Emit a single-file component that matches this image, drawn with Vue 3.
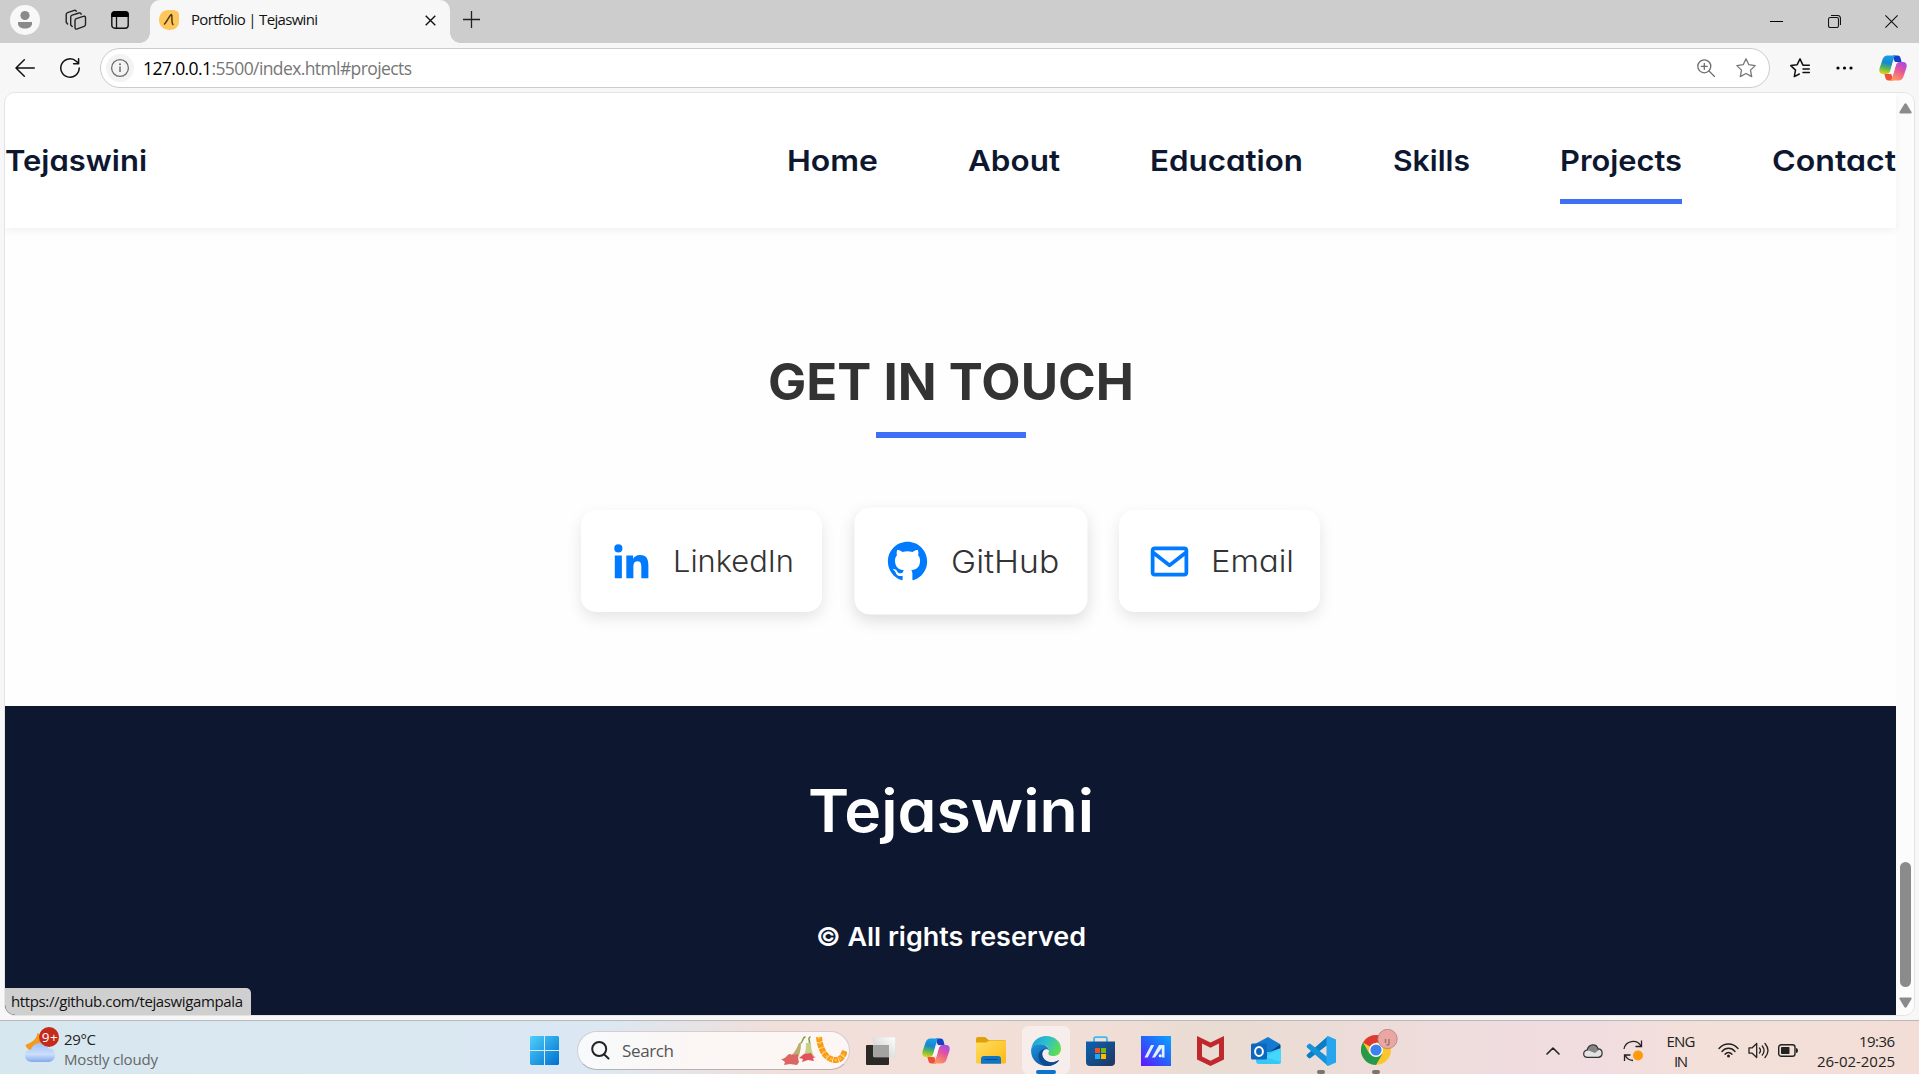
<script setup>
// Fits a label to the given width in pixels: by tracking, or with .stretch by
// widening the letterforms themselves.
const vFit = {
  mounted(el, { value, modifiers }) {
    const natural = parseFloat(getComputedStyle(el).width)
    if (modifiers.stretch) {
      el.style.width = `${value}px`
      el.style.transform = `scaleX(${value / natural})`
      return
    }
    const spacing = (value - natural) / (el.textContent.length - 1)
    el.style.letterSpacing = `${spacing}px`
    el.style.marginRight = `${-spacing}px`
  },
}

const nav = [
  { label: 'Home', width: 91 },
  { label: 'About', width: 92 },
  { label: 'Education', width: 153 },
  { label: 'Skills', width: 77 },
  { label: 'Projects', width: 122, active: true },
  { label: 'Contact', width: 124 },
]

const links = [
  {
    label: 'LinkedIn', width: 121, card: 241,
    path: 'M9.237 8.855v12.139h3.769v-6.003c0-1.584.298-3.118 2.262-3.118 1.937 0 1.961 1.811 1.961 3.218v5.904H21v-6.657c0-3.27-.704-5.783-4.526-5.783-1.835 0-3.065 1.007-3.568 1.960h-.051v-1.660H9.237zm-6.142 0H6.870v12.139H3.095zM4.983 2.821a2.188 2.188 0 1 0 0 4.376 2.188 2.188 0 0 0 0-4.376z',
  },
  {
    label: 'GitHub', width: 103, card: 222, hovered: true,
    path: 'M12.026 2c-5.509 0-9.974 4.465-9.974 9.974 0 4.406 2.857 8.145 6.821 9.465.499.09.679-.217.679-.481 0-.237-.008-.865-.011-1.696-2.775.602-3.361-1.338-3.361-1.338-.452-1.152-1.107-1.459-1.107-1.459-.905-.619.069-.605.069-.605 1.002.07 1.527 1.028 1.527 1.028.89 1.524 2.336 1.084 2.902.829.091-.645.351-1.085.635-1.334-2.214-.251-4.542-1.107-4.542-4.93 0-1.087.389-1.979 1.024-2.675-.101-.253-.446-1.268.099-2.64 0 0 .837-.269 2.742 1.021a9.582 9.582 0 0 1 2.496-.336 9.554 9.554 0 0 1 2.496.336c1.906-1.291 2.742-1.021 2.742-1.021.545 1.372.203 2.387.099 2.64.64.696 1.024 1.587 1.024 2.675 0 3.833-2.33 4.675-4.552 4.922.355.308.675.916.675 1.846 0 1.334-.012 2.41-.012 2.737 0 .267.178.577.687.479C19.146 20.115 22 16.379 22 11.974 22 6.465 17.535 2 12.026 2z',
  },
  {
    label: 'Email', width: 83, card: 201,
    path: 'M20 4H4c-1.103 0-2 .897-2 2v12c0 1.103.897 2 2 2h16c1.103 0 2-.897 2-2V6c0-1.103-.897-2-2-2zm0 2v.511l-8 6.223-8-6.222V6h16zM4 18V9.044l7.386 5.745a.994.994 0 0 0 1.228 0L20 9.044 20.002 18H4z',
  },
]
</script>

<template>
  <div class="desktop">
    <svg class="defs" width="0" height="0" aria-hidden="true">
      <defs>
        <linearGradient id="copBlue" x1="0.3" y1="0" x2="0.1" y2="1">
          <stop offset="0" stop-color="#1a9be8" /><stop offset=".35" stop-color="#1687d0" />
          <stop offset=".62" stop-color="#52b45c" /><stop offset="1" stop-color="#f4d40c" />
        </linearGradient>
        <linearGradient id="copPink" x1="0.8" y1="0" x2="0.3" y2="1">
          <stop offset="0" stop-color="#a24be8" /><stop offset=".45" stop-color="#e6559b" /><stop offset="1" stop-color="#ff9a5a" />
        </linearGradient>
        <symbol id="copilot" viewBox="0 0 28 26">
          <path d="M14 .5h4.500c2 0 2.600 1.200 3.200 3l.9 3.500h-5.600c-1.300 0-2.200-1.500-3-6.500z" fill="#1440c4" />
          <path d="M14 25.500H9.500c-2 0-2.600-1.200-3.200-3L5.400 19H11c1.500 0 2.200 1 3 6.500z" fill="#ee5138" />
          <path d="M8.500.5h8.700c-1.500.5-2.200 1.800-2.800 4l-3.100 11c-.7 2.300-1.700 3.500-3.800 3.500H4C1 19-.2 17 .5 13.500L3.600 4.300C4.500 1.800 6 .5 8.500.5z" fill="url(#copBlue)" />
          <path d="M19.500 25.500h-8.700c1.500-.5 2.200-1.800 2.800-4l3.100-11C17.400 8.200 18.400 7 20.500 7H24c3 0 4.200 2 3.500 5.500l-3.100 9.200c-.9 2.500-2.400 3.800-4.900 3.800z" fill="url(#copPink)" />
          <path d="M13.700 7.800h4.200l-1.200 2.700-2.200 7.700h-4.200l1.300-2.700z" fill="#fbf6f6" />
        </symbol>
      </defs>
    </svg>

    <div class="tabbar">
      <svg class="i-user" width="30" height="30" viewBox="0 0 30 30">
        <circle cx="15" cy="15" r="15" fill="#f8f8f8" /><circle cx="15" cy="10.500" r="4.600" fill="#8a8a8a" />
        <path d="M8 17h14v1.500c0 3.200-3 5-7 5s-7-1.800-7-5z" fill="#8a8a8a" />
      </svg>
      <svg class="i-spaces" width="22" height="22" viewBox="0 0 22 22" fill="none" stroke="#222" stroke-width="1.400" stroke-linejoin="round" stroke-linecap="round">
        <path d="m11.300 9.700 7-2.300q2.200-.6 2.200 1.300v6.800q0 1.400-1.400 1.900l-6.800 2.500q-2.300.8-2.300-1.300v-7q0-1.400 1.300-1.900z" />
        <path d="M7.200 17.500 5.700 16V8.200q0-1.500 1.400-2l7-2.200q1.600-.4 2 1.200" />
        <path d="M2.600 15 1.200 13.300V5.700q0-1.500 1.400-2L9.300 1.400q1.600-.4 2 1" />
      </svg>
      <svg class="i-tabs" width="18" height="18" viewBox="0 0 18 18">
        <rect x=".8" y=".8" width="16.400" height="16.400" rx="3" fill="none" stroke="#111" stroke-width="1.400" />
        <path d="M.3 6V3.500Q.3.300 3.500.300h11q3.200 0 3.200 3.200V6z" fill="#000" /><path d="M5.500 6v11" stroke="#111" stroke-width="1.300" />
      </svg>
      <div class="tab">
        <svg class="i-fav" width="20" height="20" viewBox="0 0 20 20">
          <path d="M9.500 0C15 0 20 0 20 5v6c0 6-4 9-9.500 9S0 16 0 10 4 0 9.500 0z" fill="#ffc65c" />
          <path d="M5.500 14c1.800-1.500 5.200-8.800 7-9.500 1.200.8-.7 7.500 1.500 10" fill="none" stroke="#4a3a12" stroke-width="1.500" stroke-linecap="round" />
        </svg>
        <span class="ui tab-title" v-fit="127">Portfolio | Tejaswini</span>
        <svg class="i-tabclose" width="11" height="11" viewBox="0 0 11 11"><path d="m.7.700 9.600 9.600M10.300.700.700 10.300" stroke="#111" stroke-width="1.400" /></svg>
      </div>
      <svg class="i-plus" width="17" height="17" viewBox="0 0 17 17"><path d="M8.500 0v17M0 8.500h17" stroke="#222" stroke-width="1.300" /></svg>
      <div class="window-controls">
        <svg width="13" height="13" viewBox="0 0 13 13"><path d="M0 6.500h13" stroke="#000" /></svg>
        <svg width="13" height="13" viewBox="0 0 13 13" fill="none" stroke="#111" stroke-width="1.100"><rect x=".5" y="2.500" width="10" height="10" rx="1.800" /><path d="M3 .5h6.500q3 0 3 3V10" /></svg>
        <svg width="13" height="13" viewBox="0 0 13 13"><path d="m.4.400 12.200 12.200M12.600.400.400 12.600" stroke="#111" stroke-width="1.100" /></svg>
      </div>
    </div>

    <div class="toolbar">
      <svg class="i-back" width="20" height="18" viewBox="0 0 20 18" fill="none" stroke="#111" stroke-width="1.500" stroke-linecap="round" stroke-linejoin="round"><path d="M19.300 9H1M9.300.800 1 9l8.300 8.200" /></svg>
      <svg class="i-reload" width="20" height="20" viewBox="0 0 20 20" fill="none" stroke="#111" stroke-width="1.500" stroke-linecap="round" stroke-linejoin="round"><path d="M19.200 10A9.200 9.200 0 1 1 16.500 3.500L18.500 5.500M18.600.800v4.900h-5" /></svg>
      <div class="address">
        <svg width="28" height="28" viewBox="0 0 28 28"><circle cx="14" cy="14" r="14" fill="#f3f3f3" /><circle cx="14" cy="14" r="8.400" fill="none" stroke="#6d6d6d" stroke-width="1.300" /><path d="M14 12.500V18" stroke="#6d6d6d" stroke-width="1.500" /><circle cx="14" cy="10.200" r="1" fill="#6d6d6d" /></svg>
        <span class="ui url" v-fit="269"><b>127.0.0.1</b>:5500/index.html#projects</span>
        <svg class="i-zoom" width="18" height="18" viewBox="0 0 18 18" fill="none" stroke="#6d6d6d" stroke-width="1.300" stroke-linecap="round"><circle cx="7.300" cy="7.300" r="6.500" /><path d="m12 12 5.500 5.500M4.300 7.300h6M7.300 4.300v6" /></svg>
        <svg class="i-star" width="20" height="20" viewBox="0 0 20 20" fill="none" stroke="#777" stroke-width="1.300" stroke-linejoin="round"><path d="m10 .8 2.800 5.900 6.400.9-4.700 4.500 1.200 6.500L10 15.500l-5.700 3.100 1.200-6.500L.8 7.600l6.400-.9z" /></svg>
      </div>
      <svg class="i-favs" width="20" height="20" viewBox="0 0 20 20" fill="none" stroke="#111" stroke-width="1.500" stroke-linejoin="round" stroke-linecap="round"><path d="m13.300 7-.5-.1L10 .9 7.200 6.700.8 7.600l4.700 4.500-1.200 6.500 5-2.600M13 11h6.300M13 14.400h6.300M13.300 7.200h6" /></svg>
      <svg class="i-dots" width="17" height="4" viewBox="0 0 17 4"><circle cx="2" cy="2" r="1.600" /><circle cx="8.500" cy="2" r="1.600" /><circle cx="15" cy="2" r="1.600" /></svg>
      <svg class="i-cop" width="28" height="26"><use href="#copilot" /></svg>
    </div>

    <div class="viewport">
      <main class="page">
        <header class="site-header">
          <span class="nav-text" v-fit.stretch="142">Tejaswini</span>
          <nav>
            <a v-for="n in nav" :key="n.label" :class="{ active: n.active }" :style="{ width: n.width + 'px' }">
              <span class="nav-text" v-fit.stretch="n.width">{{ n.label }}</span>
            </a>
          </nav>
        </header>
        <section class="contact">
          <h2><span v-fit.stretch="366">GET IN TOUCH</span></h2>
          <div class="rule"></div>
          <div class="cards">
            <a v-for="l in links" :key="l.label" class="card" :class="{ hovered: l.hovered }" :style="{ width: l.card + 'px' }">
              <svg width="45" height="45" viewBox="0 0 24 24" fill="#007bff"><path :d="l.path" /></svg>
              <span v-fit.stretch="l.width">{{ l.label }}</span>
            </a>
          </div>
        </section>
        <footer>
          <h3><span v-fit.stretch="286">Tejaswini</span></h3>
          <p><span v-fit.stretch="270">© All rights reserved</span></p>
        </footer>
        <div class="status ui"><span v-fit="232">https://github.com/tejaswigampala</span></div>
      </main>
      <div class="scrollbar">
        <svg width="13" height="11" viewBox="0 0 13 11"><path d="M5.300.900q1.200-1.400 2.400 0l4.800 8q.5 1.600-1 1.600h-10q-1.500 0-1-1.600z" fill="#8b8b8b" /></svg>
        <div class="thumb"></div>
        <svg width="13" height="11" viewBox="0 0 13 11"><path d="M5.300 10q1.200 1.400 2.400 0l4.800-7.900q.5-1.600-1-1.600h-10Q0 .5.500 2.100z" fill="#8b8b8b" /></svg>
      </div>
    </div>

    <div class="taskbar ui">
      <div class="weather">
        <svg width="36" height="38" viewBox="0 0 36 38">
          <defs><linearGradient id="cloud" x1="0" y1="0" x2="0" y2="1"><stop offset="0" stop-color="#9fc1f8" /><stop offset=".6" stop-color="#cbdefb" /><stop offset="1" stop-color="#84a8ea" /></linearGradient></defs>
          <path d="M12.500 7c-1 6-5 9-12 12 1 4 4 6 8 5l10-4V11z" fill="#f59b1c" />
          <path d="M8 36c-4.500 0-8-2-8-6.500 0-4 3-6 6-6C7.500 19 11 17 15 17c4.500 0 7 2 8.500 5.500 4 0 6.500 2.500 6.500 6.500 0 4.500-3 7-7.500 7z" fill="url(#cloud)" />
          <circle cx="24" cy="11" r="10" fill="#c42b1c" />
          <text x="16.800" y="15.500" font-size="13.500" fill="#fff" textLength="16">9+</text>
        </svg>
        <div class="weather-text"><span v-fit="32">29°C</span><span class="dim" v-fit="94">Mostly cloudy</span></div>
      </div>
      <svg class="i-start" width="29" height="29" viewBox="0 0 29 29">
        <defs><linearGradient id="win" x1="0" y1="0" x2="1" y2="1"><stop offset="0" stop-color="#4ed0fb" /><stop offset="1" stop-color="#0070cf" /></linearGradient></defs>
        <path d="M1 0h13v14H0V1zM15 0h13l1 1v13H15zM0 15h14v14H1l-1-1zM15 15h14v13l-1 1H15z" fill="url(#win)" />
      </svg>
      <div class="search">
        <svg width="19" height="19" viewBox="0 0 19 19" fill="none" stroke="#222" stroke-width="2" stroke-linecap="round"><circle cx="8.200" cy="8" r="7" /><path d="m13 13.200 4.500 4.300" /></svg>
        <span v-fit="52">Search</span>
        <svg class="flowers" width="66" height="30" viewBox="0 0 66 30">
          <g fill="none" stroke="#7c9c43" stroke-width="1.500" stroke-linecap="round"><path d="M24 1c-3 1-1 4-5 7M29 1c-3 2 1 4-1 7" /></g>
          <path d="M20 7c0 8-2 13-4 17L5 23c6-3 10-8 13-16z" fill="#bcae70" /><path d="M25 7h5c0 6 1 9 3 13H22c3-4 3-8 3-13z" fill="#c5d087" />
          <path d="M8 18c-3 3-5 5-8 5l4 3-1 3 6-1 7 1 2-3c-1-3-1-5-1-8-3 1-6 1-9 0z" fill="#dc6661" /><path d="m23 18-5 4 4 1-1 3 6-2 6 1-1-3 3-1c-3 0-4-2-5-4z" fill="#e3505e" />
          <path d="M38 1c1 11 6 23 17 23 5 0 7-4 9-9" fill="none" stroke="#fb9b14" stroke-width="6" stroke-dasharray="5 .7" /><path d="M38 1c1 11 6 23 17 23 5 0 7-4 9-9" fill="none" stroke="#ffbf42" stroke-width="2.500" stroke-dasharray="2 3" />
        </svg>
      </div>
      <div class="apps">
        <div class="app"><svg width="30" height="28" viewBox="0 0 30 28"><defs><linearGradient id="tv" x1="1" y1="0" x2="0" y2="1"><stop offset="0" stop-color="#fff" /><stop offset="1" stop-color="#c9c9c9" /></linearGradient></defs><rect x="0" y="8" width="23" height="20" rx="1" fill="#292a28" /><rect x="7.500" y="0" width="22" height="20" rx="1" fill="url(#tv)" stroke="#ddd" stroke-width=".5" /><path d="M7.500 8H23v12H7.500z" fill="#a3a3a2" /></svg></div>
        <div class="app"><svg width="28" height="26"><use href="#copilot" /></svg></div>
        <div class="app"><svg width="30" height="27" viewBox="0 0 30 27"><defs><linearGradient id="fold" x1="0" y1="0" x2="1" y2="1"><stop offset="0" stop-color="#ffde62" /><stop offset="1" stop-color="#fbb914" /></linearGradient></defs><path d="M0 2q0-2 2-2h6q1.500 0 2.300 1L12.500 3H28q2 0 2 2v5H0z" fill="#dfa008" /><path d="M0 5.500h9.500q1.300 0 2.500-1.200.8-.8 2-.8h14q2 0 2 2V25q0 1.500-1.500 1.500h-27Q0 26.500 0 25z" fill="url(#fold)" /><path d="M5 26.800V22q0-3 3-3h14q3 0 3 3v4.800z" fill="#0f75c5" /><path d="M8.500 22.500h13" stroke="#084d86" stroke-width="1" /></svg></div>
        <div class="app current">
          <svg width="30" height="30" viewBox="0 0 30 30">
            <defs>
              <linearGradient id="eg1" x1="0" y1=".2" x2="1" y2=".6"><stop offset="0" stop-color="#1aa1de" /><stop offset=".5" stop-color="#2dc1c8" /><stop offset="1" stop-color="#62df4b" /></linearGradient>
              <linearGradient id="eg2" x1="0" y1="0" x2=".7" y2="1"><stop offset="0" stop-color="#1d96dc" /><stop offset="1" stop-color="#0b4f9e" /></linearGradient>
            </defs>
            <path d="M.2 13C1.500 5 7.500 0 15.200 0 23.500 0 30 5.500 30 12.500c0 5-3.500 7.500-7.500 7.500-4 0-5.700-1.500-5-3.200 1.500-3 0-7.800-6.500-8.300C6 8.200 2 10 .2 13z" fill="url(#eg1)" />
            <path d="M.2 13C1.800 9.700 5.500 8 9.500 8.200c5 .2 8.300 3 8.500 6.300-2-2.500-6-1.500-6.700 2.500-.8 5 4 9.500 9.700 9.200 3-.1 5-1 7.200-2.200C25.500 28 20.700 30 15.500 30 6.500 30-1 22.500.2 13z" fill="url(#eg2)" />
            <path d="M11.200 17c-.8 5 4 9.500 9.700 9.200 3-.1 5-1 7.200-2.200-2.500 4-7.300 6-12.500 6-5-1-10-7-7.500-13 1-3 6-5 8-4.500-2.500-.2-4.400 2-4.900 4.500z" fill="#0c4c94" />
          </svg>
          <i class="running wide"></i>
        </div>
        <div class="app"><svg width="29" height="30" viewBox="0 0 29 30"><defs><linearGradient id="store" x1="0" y1="0" x2="1" y2="1"><stop offset="0" stop-color="#0a63b5" /><stop offset="1" stop-color="#22355c" /></linearGradient></defs><path d="M8 7V3q0-1.800 1.800-1.800h9.400Q21 1.200 21 3v4" fill="none" stroke="#39bdf1" stroke-width="1.800" /><path d="M0 5.500h29V26q0 4-4 4H4q-4 0-4-4z" fill="url(#store)" /><path d="M9 12h5v5H9z" fill="#f25022" /><path d="M15 12h5v5h-5z" fill="#7fba00" /><path d="M9 18h5v5H9z" fill="#1fa9f0" /><path d="M15 18h5v5h-5z" fill="#ffb900" /></svg></div>
        <div class="app"><svg width="30" height="30" viewBox="0 0 30 30"><defs><linearGradient id="asus" x1="0" y1="1" x2="1" y2="0"><stop offset="0" stop-color="#6512ff" /><stop offset=".5" stop-color="#2761fb" /><stop offset="1" stop-color="#0aa4ff" /></linearGradient></defs><path d="M0 0h30v30H0z" fill="url(#asus)" /><path d="M3.500 21.500 10 9h3.200L6.700 21.500zM11 21.500 18 9h5.500v12.500h-2.700v-9.500L14 21.500z" fill="#e5eeff" /><circle cx="19.200" cy="19.800" r="1.500" fill="#fff" /></svg></div>
        <div class="app"><svg width="27" height="30" viewBox="0 0 27 30"><path d="M0 0 13.500 6.500 27 0v23.500L13.500 30 0 23.500zM5 7.500v13l8.500 4.300 8.500-4.300v-13L13.500 11.700z" fill="#c1282d" fill-rule="evenodd" /></svg></div>
        <div class="app"><svg width="30" height="28" viewBox="0 0 30 28"><path d="m4 7 13-7 12 7v4L17 20 4 13z" fill="#1479d0" /><path d="m15 17 14.500-9.500v5L18 20z" fill="#0a3f86" /><path d="M5 15h13l12-4v13.500q0 2.500-2.500 2.500H8q-3 0-3-3z" fill="#35c8f4" /><path d="m14 20 16-9v14z" fill="#4ddcff" opacity=".7" /><rect x="0" y="6.500" width="16" height="16" rx="1.500" fill="#0c67bd" /><ellipse cx="8" cy="14.500" rx="3.900" ry="4.500" fill="none" stroke="#fff" stroke-width="2" /></svg></div>
        <div class="app"><svg width="30" height="30" viewBox="0 0 30 30"><path d="M22 0 1 18.500q-1 1 0 2l1.600 1.500q1 .8 2 0L22 8.500z" fill="#0b7dc4" /><path d="M22 30 1 11.500q-1-1 0-2L2.600 8q1-.8 2 0L22 21.500z" fill="#1593d8" /><path d="M22 0 30 3.500v23L22 30l-1.500-1.500v-27z" fill="#27a5ee" /></svg><i class="running"></i></div>
        <div class="app chrome"><svg width="37" height="37" viewBox="0 0 37 37"><circle cx="15" cy="21" r="15" fill="#fcc62b" /><path d="M15 21 2 13.500A15 15 0 0 1 28 13.500H15z" fill="#de3a31" /><path d="M2 13.500A15 15 0 0 0 15 36l6.500-11.200L15 21 8.500 24.700z" fill="#27994b" /><circle cx="15" cy="21" r="7" fill="#fff" /><circle cx="15" cy="21" r="5.600" fill="#3c82ee" /><circle cx="26.500" cy="10" r="9.700" fill="#e9a6a2" stroke="#a9847b" stroke-width=".8" /><path d="M24.500 10v4M28 10v5q-1 1.500-2.500.5" fill="none" stroke="#a1746a" stroke-width="1.500" /></svg><i class="running"></i></div>
      </div>
      <div class="tray">
        <svg width="14" height="8" viewBox="0 0 14 8" fill="none" stroke="#222" stroke-width="1.600" stroke-linecap="round" stroke-linejoin="round"><path d="m1 7 6-6 6 6" /></svg>
        <svg class="t-cloud" width="20" height="14" viewBox="0 0 20 14"><path d="M4.500 13.300c-5 0-5-6.500-.4-7.300C6-.8 13.500-.5 15 4.800c5.500.2 5.500 8.500 0 8.500z" fill="#e3e3e3" /><path d="M1 10c0-3 4-4.500 7-2.500L12 9l5-4C13 4 13 1 9.500 1 6 1 5 4 4.500 6 2 6 1 7.500 1 10z" fill="#858585" /><path d="M4.500 13.300c-5 0-5-6.500-.4-7.300C6-.8 13.500-.5 15 4.800c5.500.2 5.500 8.500 0 8.500z" fill="none" stroke="#333" stroke-width="1.200" /></svg>
        <svg class="t-sync" width="20" height="22" viewBox="0 0 20 22" fill="none" stroke="#222" stroke-width="1.300"><path d="M1 9A9.200 9.200 0 0 1 18 6M18.500.500v6h-6M10 20.500A9.500 9.500 0 0 1 2 15M1.500 21v-6h6" /><circle cx="15" cy="15.500" r="5" fill="#ff9a0a" stroke="none" /></svg>
        <div class="lang"><span v-fit="29">ENG</span><span v-fit="14">IN</span></div>
        <svg class="t-wifi" width="21" height="15" viewBox="0 0 21 15" fill="none" stroke="#222" stroke-width="1.400" stroke-linecap="round"><path d="M1 5.500C6-.5 15-.5 20 5.500M4 8.500c3.500-4.300 9.500-4.300 13 0M7 11.300c2-2.500 5-2.500 7 0" /><circle cx="10.500" cy="13" r="1.500" fill="#222" stroke="none" /></svg>
        <svg class="t-vol" width="21" height="17" viewBox="0 0 21 17" fill="none" stroke="#222" stroke-width="1.300" stroke-linecap="round" stroke-linejoin="round"><path d="M1 5.800h3.200L8.700 1.500v14L4.200 11.200H1zM11.500 6q2 2.500 0 5M14.300 4q3.500 4.500 0 9M17 1.500q6 7 0 14" /></svg>
        <svg class="t-bat" width="20" height="13" viewBox="0 0 20 13"><rect x=".7" y=".7" width="16.300" height="11.600" rx="2.600" fill="none" stroke="#222" stroke-width="1.400" /><rect x="3" y="3" width="8.500" height="7" rx=".8" fill="#222" /><path d="M18 4q2 0 2 2.500T18 9z" fill="#222" /></svg>
        <div class="clock"><span v-fit="36">19:36</span><span v-fit="78">26-02-2025</span></div>
      </div>
    </div>
  </div>
</template>

<style>
body { margin: 0; overflow: hidden; }
</style>

<style scoped>
.desktop { width: 1919px; height: 1074px; display: flex; flex-direction: column; background: #f7f7f7; overflow: hidden; font-family: Inter, "Liberation Sans", sans-serif; }
.defs { position: absolute; }
svg { display: block; flex: none; }
span { display: block; flex: none; width: max-content; white-space: nowrap; transform-origin: left center; }
.ui { font-family: "Open Sans", "Noto Sans", sans-serif; }

.tabbar { height: 43px; flex: none; background: #cdcdcd; display: flex; align-items: center; }
.i-user { margin: -3px 0 0 10px; }
.i-spaces { margin: -3px 0 0 25px; }
.i-tabs { margin: -3px 0 0 24px; }
.tab { position: relative; align-self: stretch; width: 300px; margin-left: 21px; background: #f7f7f7; border-radius: 10px 10px 0 0; display: flex; align-items: center; box-sizing: border-box; padding: 0 14px 3px 9px; }
.tab::before, .tab::after { content: ""; position: absolute; bottom: 0; width: 10px; height: 10px; }
.tab::before { left: -10px; background: radial-gradient(circle at 0 0, transparent 9.500px, #f7f7f7 10px); }
.tab::after { right: -10px; background: radial-gradient(circle at 100% 0, transparent 9.500px, #f7f7f7 10px); }
.tab-title { margin-left: 12px; margin-top: -2px; font-size: 15px; line-height: 20px; color: #111; }
.i-tabclose { margin-left: auto; }
.i-plus { margin: -4px 0 0 13px; }
.window-controls { margin-left: auto; margin-right: 21px; display: flex; gap: 44.500px; }

.toolbar { height: 49px; flex: none; display: flex; align-items: center; }
.i-back { margin-left: 15px; }
.i-reload { margin-left: 25px; }
.address { margin-left: 20px; width: 1670px; height: 40px; box-sizing: border-box; border: 1px solid #cbcbcb; border-radius: 20px; background: #fff; display: flex; align-items: center; padding: 0 13px 0 5px; }
.url { margin-left: 9px; font-size: 17.500px; line-height: 24px; color: #767676; }
.url b { font-weight: 400; color: #000; }
.i-zoom { margin-left: auto; }
.i-star { margin-left: 21px; }
.i-favs { margin-left: 20px; }
.i-dots { margin-left: 26px; }
.i-cop { margin-left: 26px; }

.viewport { width: 1911px; height: 924px; flex: none; margin-left: 4px; box-sizing: border-box; border: 1px solid #e4e4e4; border-radius: 11px; background: #fefefe; display: flex; overflow: hidden; }
.page { position: relative; width: 1891px; flex: none; display: flex; flex-direction: column; }
.site-header { height: 135px; flex: none; display: flex; justify-content: space-between; background: #fff; box-shadow: 0 3px 8px rgba(0, 0, 0, .05); }
.nav-text { font-size: 29px; font-weight: 600; line-height: 36px; color: #0d172f; font-feature-settings: "cv11"; margin-top: 50px; }
nav { display: flex; gap: 90px; }
nav a { height: 111px; box-sizing: border-box; }
nav a.active { border-bottom: 5px solid #3f6ff5; }
.contact { height: 478px; flex: none; display: flex; flex-direction: column; align-items: center; }
h2 { margin: 122px 0 0; height: 64px; font-size: 51px; line-height: 64px; font-weight: 700; color: #333; }
.rule { width: 150px; height: 6px; margin-top: 18px; background: #3f6ff5; }
.cards { display: flex; gap: 37.500px; margin-top: 72px; }
.card { height: 102px; box-sizing: border-box; border-radius: 15px; background: #fff; box-shadow: 0 6px 15px rgba(0, 0, 0, .1); display: flex; align-items: center; padding-left: 28px; gap: 18.500px; font-size: 30px; line-height: 40px; font-weight: 350; color: #333; font-feature-settings: "cv11"; }
.card.hovered { transform: scale(1.05); box-shadow: 0 6px 15px rgba(0, 0, 0, .13); }
footer { flex: 1; background: #0d172f; color: #fff; display: flex; flex-direction: column; align-items: center; font-weight: 600; font-feature-settings: "cv11"; }
h3 { margin: 69px 0 0; font-size: 59px; line-height: 72px; font-weight: 600; }
p { margin: 73px 0 0; font-size: 26px; line-height: 34px; }
.status { position: absolute; left: 0; bottom: 0; width: 246px; height: 27px; box-sizing: border-box; padding-left: 6px; background: #cfcfcf; border-radius: 0 5px 0 10px; font-size: 15px; line-height: 27px; color: #111; }
.scrollbar { width: 18px; flex: none; background: #fcfcfc; display: flex; flex-direction: column; align-items: center; padding-top: 10px; padding-bottom: 7px; box-sizing: border-box; }
.thumb { width: 11px; height: 125px; margin-top: auto; margin-bottom: 10px; border-radius: 6px; background: #8b8b8b; }

.taskbar { height: 54px; flex: none; margin-top: 4px; box-sizing: border-box; border-top: 1px solid #b9b9bb; background: linear-gradient(90deg, #d7e7ef 0, #dbe8f3 600px, #f2dfd9 780px, #f1ded7 1100px, #e9dcd2 1210px, #efdcdd 1450px, #f1dde0 1600px, #f3e0d9 1700px, #f2ded6 1919px); display: flex; align-items: flex-start; }
.weather { display: flex; width: 505px; padding-left: 25px; box-sizing: border-box; padding-top: 5px; }
.weather-text { margin-left: 3px; margin-top: 3px; font-size: 15px; line-height: 20px; color: #222; }
.dim { color: #666; }
.i-start { margin: 15px 0 0 25px; }
.search { width: 273px; height: 39px; box-sizing: border-box; margin: 10px 0 0 18px; padding: 0 2px 0 13px; border: 1px solid #d8ccd0; border-bottom-color: #b9aeb2; border-radius: 20px; background: linear-gradient(90deg, #f7fafc, #fcf6f4 45%); display: flex; align-items: center; font-size: 17px; color: #555; }
.search span { margin-left: 12px; }
.flowers { margin-left: auto; }
.apps { display: flex; margin-left: 3px; }
.app { position: relative; width: 55px; height: 53px; display: flex; align-items: center; justify-content: center; box-sizing: border-box; padding-top: 6px; }
.current::before { content: ""; position: absolute; left: 4px; top: 5px; width: 48px; height: 48px; border-radius: 6px; background: #f7eeeb; }
.app svg { position: relative; }
.chrome svg { margin: -6px 0 0 7px; }
.running { position: absolute; bottom: 0; left: 24px; width: 8px; height: 4px; border-radius: 3px; background: #7d7470; }
.running.wide { left: 18px; width: 20px; background: #0b74d1; }
.tray { margin-left: auto; margin-right: 24px; height: 53px; padding-top: 6px; box-sizing: border-box; display: flex; align-items: center; color: #222; font-size: 15px; line-height: 20px; }
.t-cloud { margin-left: 23px; }
.t-sync { margin-left: 20px; }
.lang { margin-left: 23px; width: 30px; display: flex; flex-direction: column; align-items: center; }
.t-wifi { margin-left: 22px; }
.t-vol { margin-left: 9px; }
.t-bat { margin-left: 9px; }
.clock { width: 97px; display: flex; flex-direction: column; align-items: flex-end; }
</style>
